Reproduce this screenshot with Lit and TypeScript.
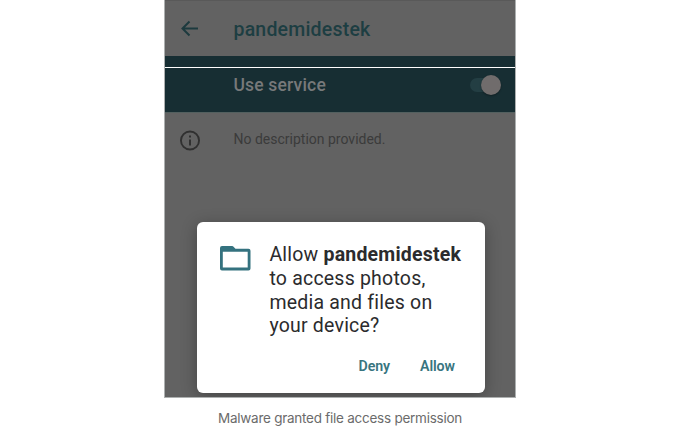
import { LitElement, html, css } from "lit";
import { customElement } from "lit/decorators.js";

@customElement("permission-dialog")
class PermissionDialog extends LitElement {
  static styles = css`
    :host { display: flex; flex-direction: column; box-sizing: border-box; width: 287.5px; height: 171px;
      padding: 21px 22px 0 23px; background: #fff; border-radius: 6px; color: #2b2b2d;
      box-shadow: 0 3px 16px rgba(0, 0, 0, 0.3); }
    .body { display: flex; height: 101px; }
    .folder { width: 31px; height: 25px; margin-top: 3px; margin-right: 18px; flex: none; }
    .message { margin: 0; font-size: 19.5px; line-height: 23.6px; letter-spacing: 0.21px; white-space: nowrap; }
    .line { display: block; }
    b { font-weight: 700; }
    .actions { display: flex; justify-content: flex-end; gap: 30px; padding-right: 8px; margin-top: 12px;
      font-size: 14.2px; line-height: 20px; font-weight: 600; color: #38757f; }
    .actions span { white-space: nowrap; letter-spacing: -0.1px; }
  `;
  render() {
    return html`
      <div class="body">
        <svg class="folder" viewBox="0 0 31 25">
          <path fill="#34727f" fill-rule="evenodd"
            d="M2 0H12Q13 0 14 1.2L15.500 2.800H28.500Q30.500 2.800 30.500 4.800V22.500Q30.500 24.500 28.500 24.500H2Q0 24.500 0 22.500V2Q0 0 2 0ZM2.800 5.800V21.500H27.700V5.800Z" />
        </svg>
        <p class="message">
          <span class="line">Allow <b>pandemidestek</b></span>
          <span class="line">to access photos,</span>
          <span class="line">media and files on</span>
          <span class="line">your device?</span>
        </p>
      </div>
      <div class="actions"><span>Deny</span><span>Allow</span></div>
    `;
  }
}

@customElement("app-root")
class AppRoot extends LitElement {
  static styles = css`
    :host { display: flex; flex-direction: column; align-items: center; height: 428px; overflow: hidden;
      background: #fff; font-family: Roboto, sans-serif; }
    .screen { position: relative; box-sizing: border-box; width: 352px; height: 398px; overflow: hidden;
      background: #626262; flex: none; border: 1px solid #adb0b0; border-top: 0; }
    .row { display: flex; align-items: center; box-sizing: border-box; padding-left: 14.5px; white-space: nowrap; }
    .lead { width: 54px; flex: none; display: flex; }
    .bar { height: 56px; padding-top: 3px; box-shadow: inset 0 1px #595959; }
    .title { font-size: 19.5px; font-weight: 500; letter-spacing: 0.2px; color: #1d3e42; }
    .strip { height: 11px; background: #172e33; }
    .rule { height: 1px; margin: 0 -1px; background: #fff; }
    .service { height: 45px; background: #172e33; color: #77797a; font-size: 17.5px; font-weight: 500;
      letter-spacing: 0.17px; padding-right: 14px; padding-bottom: 10px; border-bottom: 1px solid #53605f; }
    .label { flex: 1; }
    .toggle { display: flex; align-items: center; justify-content: flex-end; width: 31px; height: 20px; }
    .track { width: 22px; height: 14px; margin-right: -11px; border-radius: 7px; background: #233e43; }
    .knob { width: 20px; height: 20px; border-radius: 50%; background: #706c6c; box-shadow: 0 1px 2px #0005; }
    .info { height: 54px; font-size: 14px; color: #3b3b3b; }
    .desc { padding-bottom: 2px; }
    permission-dialog { position: absolute; left: 32.4px; top: 222.4px; }
    .caption { font: 13.5px/20px Inter, sans-serif; letter-spacing: -0.25px; color: #6b6b6b; margin-top: 10px; white-space: nowrap; }
  `;
  render() {
    return html`
      <div class="screen">
        <div class="row bar">
          <div class="lead">
            <svg width="20" height="20" viewBox="0 0 20 20" fill="none" stroke="#1d3a3e" stroke-width="2">
              <path d="M18 8.500H3M9.500 1.500L2.500 8.500L9.500 15.500" />
            </svg>
          </div>
          <span class="title">pandemidestek</span>
        </div>
        <div class="strip"></div>
        <div class="rule"></div>
        <div class="row service">
          <div class="lead"></div>
          <span class="label">Use service</span>
          <div class="toggle"><div class="track"></div><div class="knob"></div></div>
        </div>
        <div class="row info">
          <div class="lead">
            <svg width="21" height="21" viewBox="0 0 21 21" fill="none" stroke="#303030" stroke-width="1.9">
              <circle cx="10" cy="10.500" r="9.050" />
              <path d="M10 9.500V15.500M10 5.500V7.500" />
            </svg>
          </div>
          <span class="desc">No description provided.</span>
        </div>
        <permission-dialog></permission-dialog>
      </div>
      <div class="caption">Malware granted file access permission</div>
    `;
  }
}
